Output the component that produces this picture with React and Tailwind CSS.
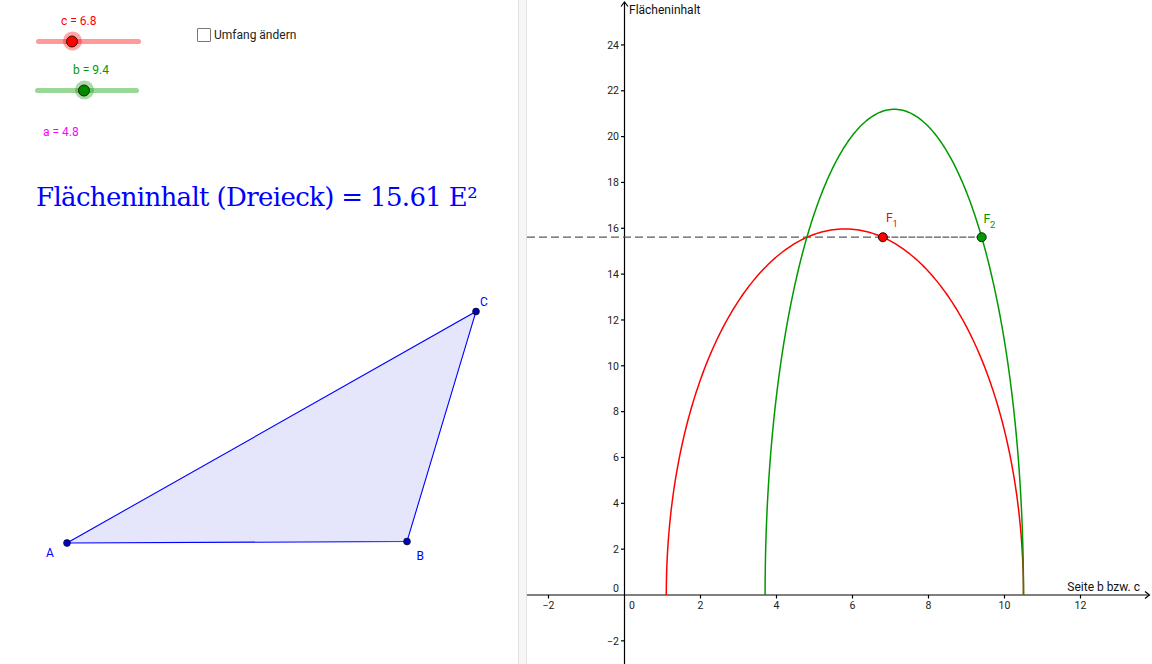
import React from "react";

// Koordinatensystem (Pixel) der Grafik rechts
const X0 = 624.5;
const SX = 38;
const Y0 = 595;
const SY = 22.92;
const px = (x) => X0 + SX * x;
const py = (y) => Y0 - SY * y;

// Fläche als Funktion einer Seite bei festem Umfang 21
function curvePath(lo, hi, k) {
  const mid = (lo + hi) / 2;
  const half = (hi - lo) / 2;
  const pts = [];
  for (let i = 0; i <= 240; i++) {
    const t = Math.PI - (Math.PI * i) / 240;
    const x = mid + half * Math.cos(t);
    const v = Math.max(0, k * (x - lo) * (hi - x));
    pts.push(`${px(x).toFixed(2)},${py(Math.sqrt(v)).toFixed(2)}`);
  }
  return "M" + pts.join(" L");
}

const RED_PATH = curvePath(1.1, 10.5, 10.5 * 1.1);
const GREEN_PATH = curvePath(3.7, 10.5, 10.5 * 3.7);
const AREA = 15.61;

function Slider({ label, color, track, halo, knob, labelLeft, knobLeft, width, ml }) {
  return (
    <div className={`flex flex-col ${ml}`} style={{ width }}>
      <div className={`text-[12px] leading-[14px] ${color} ${labelLeft}`}>{label}</div>
      <div className="relative flex h-[26px] items-center">
        <div className={`h-[5px] w-full rounded-full ${track}`} />
        <div
          className={`absolute top-1/2 flex h-[19px] w-[19px] -translate-y-1/2 items-center justify-center rounded-full ${halo} ${knobLeft}`}
        >
          <div className={`h-[12px] w-[12px] rounded-full border border-[#3a1010] ${knob}`} />
        </div>
      </div>
    </div>
  );
}

function Triangle() {
  return (
    <svg width="518" height="300" viewBox="0 280 518 300" className="block">
      <polygon points="67,543 407,541.5 476,311.5" fill="#e5e5fb" stroke="#0000ff" strokeWidth="1.1" />
      {[
        [67, 543],
        [407, 541.5],
        [476, 311.5],
      ].map(([x, y]) => (
        <circle key={x} cx={x} cy={y} r="3.4" fill="#0000c8" stroke="#111" strokeWidth="0.8" />
      ))}
      <g fill="#0000ff" fontSize="12" fontFamily="Roboto, sans-serif">
        <text x="46" y="556.5">A</text>
        <text x="416.5" y="560">B</text>
        <text x="480" y="306">C</text>
      </g>
    </svg>
  );
}

function Graph() {
  const yTicks = [-2, 2, 4, 6, 8, 10, 12, 14, 16, 18, 20, 22, 24];
  const xTicks = [-2, 2, 4, 6, 8, 10, 12];
  const fy = py(AREA);
  return (
    <svg width="625" height="664" viewBox="527 0 625 664" className="block">
      <g stroke="#000" strokeWidth="1.2" fill="none">
        <line x1="527" y1={Y0} x2="1149" y2={Y0} />
        <line x1={X0} y1="2" x2={X0} y2="664" />
        <path d={`M1145,591.5 L1149.5,595 L1145,598.5`} />
        <path d={`M621,6.5 L${X0},2 L628,6.5`} />
        {yTicks.map((k) => (
          <line key={`yt${k}`} x1="621" y1={py(k)} x2={X0} y2={py(k)} />
        ))}
        {xTicks.map((k) => (
          <line key={`xt${k}`} x1={px(k)} y1={Y0} x2={px(k)} y2="598.5" />
        ))}
      </g>
      <g fill="#222" fontSize="10.5" fontFamily="Roboto, sans-serif">
        {yTicks.map((k) => (
          <text key={`yl${k}`} x="619" y={py(k) + 3.7} textAnchor="end">
            {k < 0 ? `\u2212${-k}` : k}
          </text>
        ))}
        <text x="619" y="592" textAnchor="end">0</text>
        {xTicks.map((k) => (
          <text key={`xl${k}`} x={px(k)} y="609" textAnchor="middle">
            {k < 0 ? `\u2212${-k}` : k}
          </text>
        ))}
        <text x="632" y="609" textAnchor="middle">0</text>
      </g>
      <g fill="#111" fontSize="12" fontFamily="Roboto, sans-serif">
        <text x="629" y="14">Flächeninhalt</text>
        <text x="1140" y="590.5" textAnchor="end">Seite b bzw. c</text>
      </g>

      <line x1="527" y1={fy} x2={px(6.8)} y2={fy} stroke="#5a5a5a" strokeWidth="1.2" strokeDasharray="8 4" />
      <line x1={px(6.8)} y1={fy} x2={px(9.4)} y2={fy} stroke="#5a5a5a" strokeWidth="1.2" strokeDasharray="7 1.5" />

      <path d={RED_PATH} fill="none" stroke="#ff0000" strokeWidth="1.5" />
      <path d={GREEN_PATH} fill="none" stroke="#009900" strokeWidth="1.5" />

      <circle cx={px(6.8)} cy={fy} r="4.5" fill="#ff0000" stroke="#300" strokeWidth="1" />
      <circle cx={px(9.4)} cy={fy} r="4.5" fill="#009900" stroke="#030" strokeWidth="1" />

      <g fontFamily="Roboto, sans-serif">
        <text x="886" y="222" fontSize="12.5" fill="#ff0000">F</text>
        <text x="892.5" y="226.5" fontSize="9.5" fill="#ff0000">1</text>
        <text x="983.5" y="223" fontSize="12.5" fill="#009900">F</text>
        <text x="990" y="228" fontSize="9.5" fill="#009900">2</text>
      </g>
    </svg>
  );
}

export default function App() {
  return (
    <div className="flex h-[664px] w-[1152px] overflow-hidden bg-white font-['Roboto',sans-serif]">
      <div className="flex w-[518px] shrink-0 flex-col">
        <div className="flex items-start pt-[14px]">
          <div className="flex flex-col">
            <Slider
              label="c = 6.8"
              color="text-[#ff0000]"
              track="bg-[#ff9a9a]"
              halo="bg-[#ff0000]/35"
              knob="bg-[#ff0000]"
              labelLeft="pl-[25px]"
              knobLeft="left-[26.5px]"
              width={105}
              ml="ml-[36px]"
            />
            <div className="mt-[9px]">
              <Slider
                label="b = 9.4"
                color="text-[#009900]"
                track="bg-[#9ad89a]"
                halo="bg-[#009900]/35"
                knob="bg-[#008a00]"
                labelLeft="pl-[38px]"
                knobLeft="left-[39.5px]"
                width={104}
                ml="ml-[35px]"
              />
            </div>
          </div>
          <label className="ml-[56px] mt-[14px] flex items-center gap-[3px] text-[12px] leading-[14px] text-[#222]">
            <span className="h-[14px] w-[14px] rounded-[1px] border border-[#777] bg-white" />
            Umfang ändern
          </label>
        </div>
        <div className="ml-[43px] mt-[22px] text-[12px] leading-[14px] text-[#ff00ff]">a = 4.8</div>
        <div className="ml-[36px] mt-[41px] font-['DejaVu_Serif',serif] text-[26px] leading-[34px] tracking-[-0.65px] text-[#0000ff]">
          Flächeninhalt (Dreieck) = 15.61 E²
        </div>
        <div className="mt-[66px]">
          <Triangle />
        </div>
      </div>
      <div className="w-[9px] shrink-0 border-x border-[#e2e2e2] bg-[#f6f6f6]" />
      <Graph />
    </div>
  );
}
